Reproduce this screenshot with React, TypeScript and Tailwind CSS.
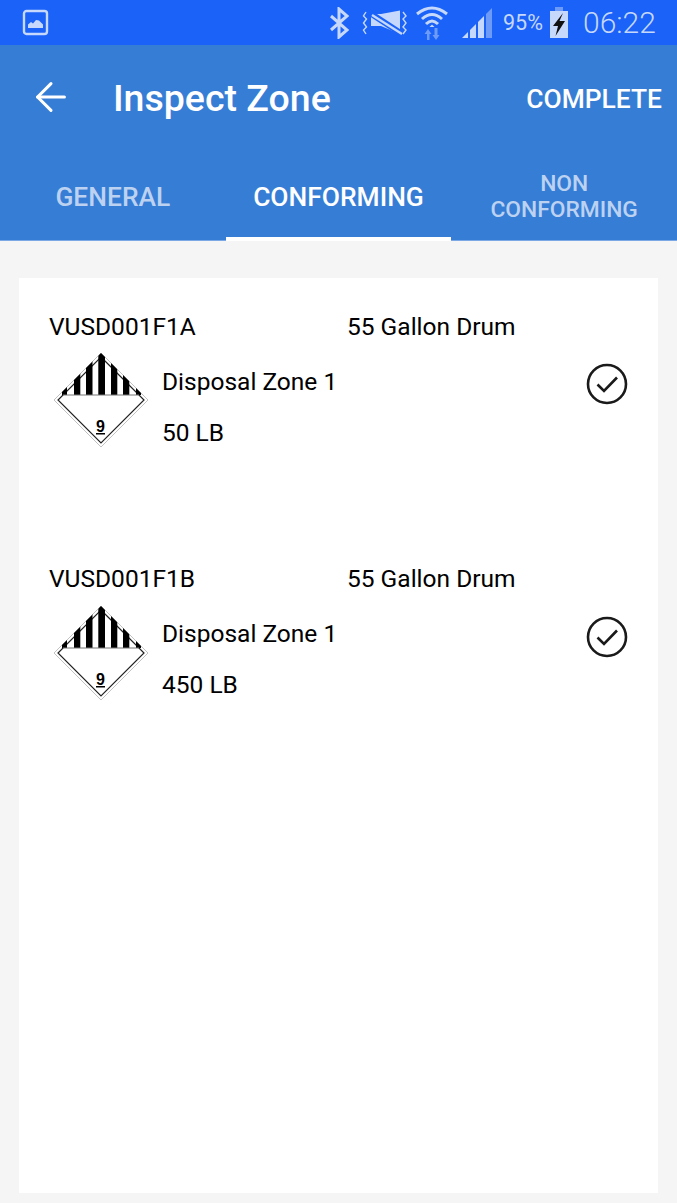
import { ArrowLeft } from 'lucide-react'

const rows = [
  { id: 'VUSD001F1A', weight: '50 LB' },
  { id: 'VUSD001F1B', weight: '450 LB' },
]

function HazardDiamond() {
  return (
    <svg width="96" height="96" viewBox="0 0 96 96" className="shrink-0">
      <defs>
        <clipPath id="top-half">
          <polygon points="48,1 95,48 48,95 1,48" />
        </clipPath>
      </defs>
      <polygon points="48,1 95,48 48,95 1,48" fill="#fff" stroke="#bbb" strokeWidth="0.9" />
      <polygon points="48,5 91,48 48,91 5,48" fill="none" stroke="#222" strokeWidth="1.2" />
      <g clipPath="url(#top-half)" fill="#000">
        <rect x="9" y="34" width="5" height="9" />
        <rect x="21" y="20" width="6.3" height="23" />
        <rect x="33" y="8" width="6.5" height="35" />
        <rect x="45.3" y="0" width="6.7" height="43" />
        <rect x="58" y="8" width="6.3" height="35" />
        <rect x="70" y="20" width="6.3" height="23" />
        <rect x="83" y="34" width="5" height="9" />
      </g>
      <line x1="10" y1="43" x2="86" y2="43" stroke="#777" strokeWidth="1.2" />
      <text x="47.5" y="80" textAnchor="middle" fontSize="16" fontWeight="700" fontFamily="Liberation Sans, sans-serif" fill="#000">9</text>
      <rect x="43" y="81" width="9" height="1.5" fill="#000" />
    </svg>
  )
}

function CheckCircle() {
  return (
    <svg width="42" height="42" viewBox="0 0 42 42" className="shrink-0">
      <circle cx="21" cy="21" r="19" fill="none" stroke="#1a1a1a" strokeWidth="2.6" />
      <path d="M11.5 21.5 L18 28 L31 14.5" fill="none" stroke="#1a1a1a" strokeWidth="2.6" />
    </svg>
  )
}

function StatusBar() {
  return (
    <div className="h-[45px] bg-[#1a62f8] flex items-center pl-[22px] text-[#c6d8fc] font-['Roboto',sans-serif]">
      <svg width="27" height="27" viewBox="0 0 27 27" className="shrink-0">
        <rect x="2" y="2" width="23" height="23" rx="2.5" fill="none" stroke="#c6d8fc" strokeWidth="2.4" />
        <path d="M6 19 V15.5 L9 13 L11 14.5 L14 11 L17 11.5 L21 15.5 V19 Z" fill="#c6d8fc" />
      </svg>
      <svg width="24" height="32" viewBox="0 0 24 32" className="ml-[279px] shrink-0">
        <path d="M3 9 L19 23 L11 30 V2 L19 9 L3 23" fill="none" stroke="#c6d8fc" strokeWidth="3" />
      </svg>
      <svg width="46" height="30" viewBox="0 0 46 30" className="ml-[10px] shrink-0">
        <path d="M9 6 H19 L38 2.5 V26 L19 18 H9 Z" fill="#c6d8fc" />
        <path d="M8 5 L40 26" stroke="#1a62f8" strokeWidth="6" />
        <path d="M10 7 L40 26" stroke="#c6d8fc" strokeWidth="2.4" />
        <path d="M4 4 L1.5 8 L4.5 11 L1.5 15 L4.5 19 L1.5 22 L4 26" fill="none" stroke="#c6d8fc" strokeWidth="1.4" />
        <path d="M41 4 L44 8 L41 11 L44 15 L41 19 L44 22 L41 26" fill="none" stroke="#c6d8fc" strokeWidth="1.4" />
      </svg>
      <svg width="34" height="36" viewBox="0 0 34 36" className="ml-[7px] shrink-0">
        <path d="M2 9 Q17 -3 32 9" fill="none" stroke="#c6d8fc" strokeWidth="3" />
        <path d="M7 14 Q17 5 27 14" fill="none" stroke="#c6d8fc" strokeWidth="3" />
        <path d="M11 19 Q17 13 23 19" fill="none" stroke="#c6d8fc" strokeWidth="3" />
        <path d="M14.5 22 L17 19.5 L19.5 22 Z" fill="#c6d8fc" />
        <path d="M13 24 L9.5 29 H12 V35 H14.5 V29 H16.5 Z" fill="#6f9bf8" />
        <path d="M21 35 L24.5 30 H22.5 V23 H19.5 V30 H17.5 Z" fill="#6f9bf8" />
      </svg>
      <svg width="32" height="32" viewBox="0 0 32 32" className="ml-[12px] shrink-0">
        <path d="M1 31 L7 25 V31 Z" fill="#c6d8fc" />
        <path d="M9 23 L15 17 V31 H9 Z" fill="#c6d8fc" />
        <path d="M17 15 L23 9 V31 H17 Z" fill="#c6d8fc" />
        <path d="M25 7 L31 1 V31 H25 Z" fill="#6f9bf8" />
      </svg>
      <span className="ml-[10px] text-[21.5px] leading-none w-[42px]">95%</span>
      <svg width="20" height="32" viewBox="0 0 20 32" className="ml-[4px] shrink-0">
        <rect x="6" y="0" width="8" height="4" fill="#6f9bf8" />
        <rect x="1" y="4" width="18" height="27" fill="#c6d8fc" />
        <path d="M14 6 L4 19 H9 L6.5 29 L16 14 H10.5 Z" fill="#111" />
      </svg>
      <span className="ml-[14px] text-[30px] leading-none font-light">06:22</span>
    </div>
  )
}

export default function App() {
  return (
    <div className="w-[677px] h-[1203px] bg-[#f5f5f5] flex flex-col font-['Roboto',sans-serif] overflow-hidden">
      <StatusBar />

      {/* header */}
      <div className="h-[108px] bg-[#367dd6] flex items-center text-white">
        <ArrowLeft size={46} strokeWidth={1.6} className="ml-[28px] -mt-[4px] shrink-0" />
        <h1 className="ml-[39px] text-[37.5px] font-medium leading-none">Inspect Zone</h1>
        <span className="ml-auto mr-[15px] text-[26.4px] font-medium leading-none">COMPLETE</span>
      </div>

      {/* tabs */}
      <div className="h-[88px] bg-[#367dd6] border-b border-[#7ca9e5] grid grid-cols-3 text-[26.4px] font-medium leading-[26px] text-center text-[#bcd2f0]">
        <div className="flex items-center justify-center pt-[1px]">GENERAL</div>
        <div className="flex items-center justify-center text-white border-b-4 border-white -mb-px pt-[3px]">CONFORMING</div>
        <div className="flex items-center justify-center text-[22.8px] pt-[1px]">NON<br />CONFORMING</div>
      </div>

      {/* list */}
      <div className="mt-[37px] mx-[19px] h-[915px] bg-white pt-[35px] pl-[30px] pr-[30px] text-[24.5px] leading-none text-black">
        {rows.map((r) => (
          <div key={r.id} className="h-[252.5px]">
            <div className="flex h-[28px] items-center">
              <span className="w-[298px]">{r.id}</span>
              <span>55 Gallon Drum</span>
            </div>
            <div className="flex items-start mt-[11px]">
              <div className="ml-[4px]">
                <HazardDiamond />
              </div>
              <div className="ml-[13px] pt-[16px]">
                <div className="h-[28px] flex items-center">Disposal Zone 1</div>
                <div className="h-[28px] mt-[23px] flex items-center">{r.weight}</div>
              </div>
              <div className="ml-auto mt-[11px]">
                <CheckCircle />
              </div>
            </div>
          </div>
        ))}
      </div>
    </div>
  )
}
